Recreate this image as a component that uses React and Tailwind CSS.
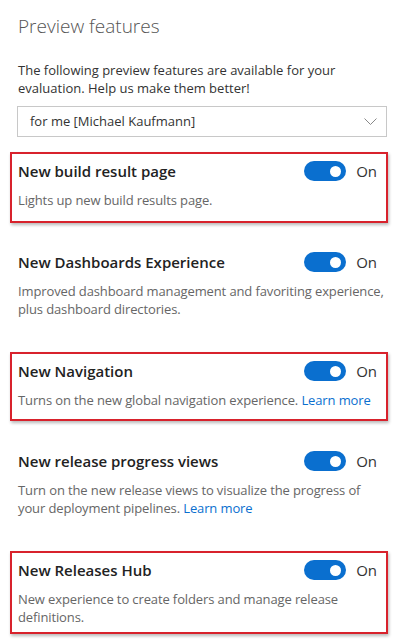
import { useState } from "react"

const features = [
    { title: "New build result page", desc: "Lights up new build results page.", boxed: true, pb: "pb-[12px]" },
    { title: "New Dashboards Experience", desc: "Improved dashboard management and favoriting experience, plus dashboard directories.", pb: "pb-[11px]" },
    { title: "New Navigation", desc: "Turns on the new global navigation experience.", link: true, boxed: true, pb: "pb-[10px]" },
    { title: "New release progress views", desc: "Turn on the new release views to visualize the progress of your deployment pipelines.", link: true, pb: "pb-[11px]" },
    { title: "New Releases Hub", desc: "New experience to create folders and manage release definitions.", boxed: true, pb: "pb-[6px]" },
]

const Toggle = ({ on, onClick }) => (
    <button
        onClick={onClick}
        className={`relative w-[42px] h-[20px] rounded-full ${on ? "bg-[#0a6fcf]" : "bg-[#c8c8c8]"}`}
    >
        <span className={`absolute top-[4.5px] w-[11px] h-[11px] rounded-full bg-white ${on ? "right-[5px]" : "left-[5px]"}`} />
    </button>
)

const FeatureRow = ({ item, gap }) => {
    const [on, setOn] = useState(true)
    return (
        <div
            className={`w-[378px] border-2 pl-[6px] pt-[7px] ${item.pb} ${gap} ${item.boxed ? "border-[#d8222c] shadow-[1px_2px_3px_rgba(0,0,0,0.28)]" : "border-transparent"}`}
        >
            <div className="flex items-center justify-between h-[20px] pr-[9px]">
                <span className="text-[15px] font-semibold text-[#222] leading-[20px]">{item.title}</span>
                <div className="flex items-center">
                    <Toggle on={on} onClick={() => setOn(!on)} />
                    <span className="ml-[10px] text-[15px] text-[#333] leading-[20px]">{on ? "On" : "Off"}</span>
                </div>
            </div>
            <p className="mt-[10px] text-[13px] leading-[18px] tracking-[-0.12px] text-[#666]">
                {item.desc}
                {item.link && <span className="text-[#0a6fcf]"> Learn more</span>}
            </p>
        </div>
    )
}

export default function App() {
    const gaps = ["mt-[15px]", "mt-[20px]", "mt-[21px]", "mt-[21px]", "mt-[21px]"]
    return (
        <div
            className="w-[408px] h-[640px] bg-white overflow-hidden px-[10px] pt-[12px]"
            style={{ fontFamily: '"Segoe UI", "Open Sans", "Noto Sans", sans-serif' }}
        >
            <div className="pl-[8px]">
                <h1 className="text-[19px] font-light text-[#555] leading-[28px]">Preview features</h1>
                <p className="mt-[21px] text-[13px] leading-[18px] text-[#333] w-[340px]">
                    The following preview features are available for your evaluation. Help us make them better!
                </p>
            </div>
            <div className="ml-[7px] mt-[9px] w-[370px] h-[31px] border border-[#c8c8c8] flex items-center justify-between pl-[12px] pr-[9px]">
                <span className="text-[13px] text-[#333]">for me [Michael Kaufmann]</span>
                <svg width="13" height="8" viewBox="0 0 13 8" fill="none">
                    <polyline points="0.5,0.5 6.5,6.5 12.5,0.5" stroke="#888" strokeWidth="1" />
                </svg>
            </div>
            {features.map((item, i) => (
                <FeatureRow key={item.title} item={item} gap={gaps[i]} />
            ))}
        </div>
    )
}
